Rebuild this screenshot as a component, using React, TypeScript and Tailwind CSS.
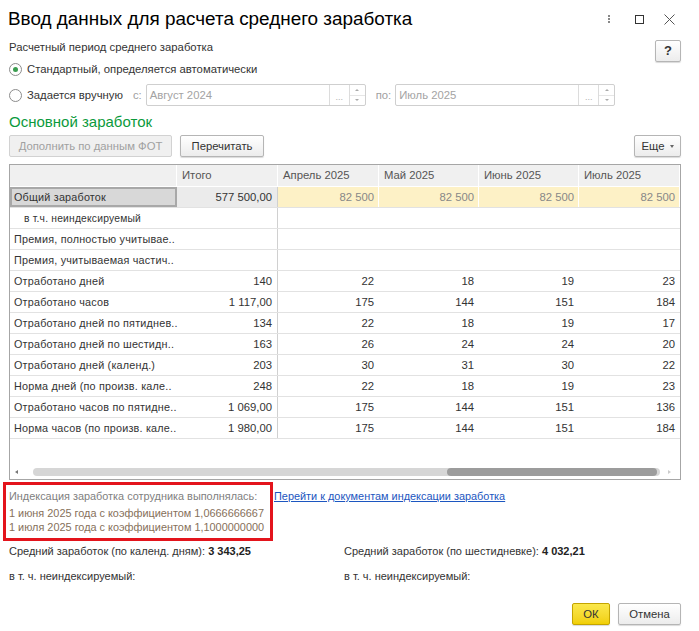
import React from "react";

const months = ["Апрель 2025", "Май 2025", "Июнь 2025", "Июль 2025"];

const rows: { label: string; indent?: boolean; total?: string; vals?: string[] }[] = [
    { label: "в т.ч. неиндексируемый", indent: true },
    { label: "Премия, полностью учитывае.." },
    { label: "Премия, учитываемая частич.." },
    { label: "Отработано дней", total: "140", vals: ["22", "18", "19", "23"] },
    { label: "Отработано часов", total: "1 117,00", vals: ["175", "144", "151", "184"] },
    { label: "Отработано дней по пятиднев..", total: "134", vals: ["22", "18", "19", "17"] },
    { label: "Отработано дней по шестидн..", total: "163", vals: ["26", "24", "24", "20"] },
    { label: "Отработано дней (календ.)", total: "203", vals: ["30", "31", "30", "22"] },
    { label: "Норма дней (по произв. кале..", total: "248", vals: ["22", "18", "19", "23"] },
    { label: "Отработано часов по пятидне..", total: "1 069,00", vals: ["175", "144", "151", "136"] },
    { label: "Норма часов (по произв. кале..", total: "1 980,00", vals: ["175", "144", "151", "184"] },
];

const cols = "grid grid-cols-[167px_101px_101px_100px_100px_101px]";

function Btn({ children, disabled, className = "" }: { children: React.ReactNode; disabled?: boolean; className?: string }) {
    return (
        <div
            className={`h-[22px] flex items-center justify-center rounded-[2px] border text-[11.3px] whitespace-nowrap ${
                disabled
                    ? "border-[#d2d2d2] bg-[#f0f0f0] text-[#a0a0a0]"
                    : "border-[#b5b5b5] bg-gradient-to-b from-white to-[#ececec] text-[#333] shadow-[0_1px_1px_rgba(0,0,0,0.15)]"
            } ${className}`}
        >
            {children}
        </div>
    );
}

function PeriodInput({ value, className = "" }: { value: string; className?: string }) {
    return (
        <div className={`h-[22px] flex border border-[#cfcfcf] rounded-[2px] bg-white ${className}`}>
            <div className="flex-1 flex items-center pl-[3px] text-[#a3a3a3]">{value}</div>
            <div className="w-[20px] border-l border-[#dcdcdc] flex items-end justify-center pb-[3px] text-[9px] leading-none text-[#b0b0b0]">...</div>
            <div className="w-[16px] border-l border-[#dcdcdc] flex flex-col">
                <div className="flex-1 flex items-center justify-center border-b border-[#e6e6e6]">
                    <span className="block w-0 h-0 border-x-[2px] border-x-transparent border-b-[2px] border-b-[#aaa]" />
                </div>
                <div className="flex-1 flex items-center justify-center">
                    <span className="block w-0 h-0 border-x-[2px] border-x-transparent border-t-[2px] border-t-[#aaa]" />
                </div>
            </div>
        </div>
    );
}

function Radio({ checked }: { checked?: boolean }) {
    return (
        <span className="w-[13px] h-[13px] rounded-full border border-[#8c8c8c] bg-white flex items-center justify-center">
            {checked && <span className="w-[5px] h-[5px] rounded-full bg-[#3a9d4f]" />}
        </span>
    );
}

export default function App() {
    return (
        <div className="w-[699px] h-[631px] bg-white px-[9px] flex flex-col text-[#333] font-['Liberation_Sans',Arial,sans-serif] text-[11.3px] overflow-hidden">
            {/* Title bar */}
            <div className="h-[38px] flex items-center -ml-[1px]">
                <div className="flex-1 text-[18.9px] text-black whitespace-nowrap">Ввод данных для расчета среднего заработка</div>
                <div className="flex items-center mr-[6px]">
                    <div className="w-[30px] flex flex-col items-center gap-[1px]">
                        <span className="w-[2px] h-[2px] bg-[#888]" />
                        <span className="w-[2px] h-[2px] bg-[#888]" />
                        <span className="w-[2px] h-[2px] bg-[#888]" />
                    </div>
                    <div className="w-[30px] flex justify-center">
                        <span className="w-[9px] h-[9px] border border-[#333]" />
                    </div>
                    <div className="w-[30px] flex justify-center">
                        <svg width="11" height="11" viewBox="0 0 11 11">
                            <path d="M0.5 0.5 L10.5 10.5 M10.5 0.5 L0.5 10.5" stroke="#555" strokeWidth="1" />
                        </svg>
                    </div>
                </div>
            </div>

            {/* Period section */}
            <div className="flex">
                <div className="flex-1 flex flex-col">
                    <div className="h-[18px] flex items-center">Расчетный период среднего заработка</div>
                    <div className="h-[20px] mt-[3px] flex items-center gap-[5px]">
                        <Radio checked />
                        <span>Стандартный, определяется автоматически</span>
                    </div>
                    <div className="h-[22px] mt-[5px] flex items-center whitespace-nowrap">
                        <Radio />
                        <span className="ml-[5px]">Задается вручную</span>
                        <span className="ml-[10px] text-[#a0a0a0]">с:</span>
                        <PeriodInput value="Август 2024" className="ml-[4px] w-[220px]" />
                        <span className="ml-[10px] text-[#a0a0a0]">по:</span>
                        <PeriodInput value="Июль 2025" className="ml-[4px] w-[220px]" />
                    </div>
                </div>
                <Btn className="w-[26px] mt-[2px] mr-[9px] font-bold text-[13px]">?</Btn>
            </div>

            {/* Main salary */}
            <div className="h-[20px] mt-[6px] flex items-center text-[15px] text-[#0b9a3c]">Основной заработок</div>
            <div className="mt-[3px] flex items-center">
                <Btn disabled className="w-[163px]">Дополнить по данным ФОТ</Btn>
                <Btn className="w-[84px] ml-[8px]">Перечитать</Btn>
                <div className="flex-1" />
                <Btn className="w-[47px] mr-[9px] gap-[5px]">
                    <span>Еще</span>
                    <span className="block w-0 h-0 border-x-[2.5px] border-x-transparent border-t-[3px] border-t-[#666]" />
                </Btn>
            </div>

            {/* Table */}
            <div className="mt-[7px] w-[672px] h-[316px] border border-[#a6a6a6] flex flex-col overflow-hidden">
                <div className={`${cols} h-[22px] bg-[#f0f0f0] text-[#555]`}>
                    <div className="border-r border-white border-b" />
                    <div className="border-r border-white border-b flex items-center pl-[5px]">Итого</div>
                    {months.map((m) => (
                        <div key={m} className="border-r border-white border-b flex items-center pl-[5px]">
                            {m}
                        </div>
                    ))}
                </div>
                <div className={`${cols} h-[21px] border-b border-[#e2e2e2]`}>
                    <div className="bg-[#d8d8d8] border-2 border-[#a8a8a8] flex items-center pl-[2px] text-[10.8px] tracking-[0.2px] text-[#333]">
                        Общий заработок
                    </div>
                    <div className="bg-[#ebebeb] border-r border-[#d0d0d0] flex items-center justify-end pr-[5px]">577 500,00</div>
                    {months.map((m) => (
                        <div key={m} className="bg-[#fdf1c6] border-r border-white flex items-center justify-end pr-[4px] text-[#888]">
                            82 500
                        </div>
                    ))}
                </div>
                {rows.map((r) => (
                    <div key={r.label} className={`${cols} h-[21px] border-b border-[#e2e2e2]`}>
                        <div
                            className={`flex items-center whitespace-nowrap tracking-[0.2px] ${
                                r.indent ? "pl-[14px] pt-[2px] text-[10.3px]" : "pl-[4px] text-[10.8px]"
                            }`}
                        >
                            {r.label}
                        </div>
                        <div className="border-r border-[#d0d0d0] flex items-center justify-end pr-[5px]">{r.total}</div>
                        {months.map((m, i) => (
                            <div key={m} className="flex items-center justify-end pr-[5px]">
                                {r.vals?.[i]}
                            </div>
                        ))}
                    </div>
                ))}
                <div className="flex-1" />
                {/* horizontal scrollbar */}
                <div className="h-[12px] mb-[1px] flex items-center">
                    <span className="ml-[5px] block w-0 h-0 border-y-[2.5px] border-y-transparent border-r-[3px] border-r-[#777]" />
                    <div className="ml-[15px] w-[627px] h-[8px] rounded-full bg-[#d6d6d6] flex">
                        <div className="ml-[414px] w-[210px] h-[8px] rounded-full bg-[#9c9c9c]" />
                    </div>
                    <span className="ml-[8px] block w-0 h-0 border-y-[2.5px] border-y-transparent border-l-[3px] border-l-[#ccc]" />
                </div>
            </div>

            {/* Indexation */}
            <div className="mt-[2px] flex items-start whitespace-nowrap text-[10.9px]">
                <div className="-ml-[6px] w-[270px] h-[59px] border-[3px] border-[#e3141c] pl-[3px] pt-[3px] flex flex-col">
                    <div className="h-[16px] flex items-center text-[#808080]">Индексация заработка сотрудника выполнялась:</div>
                    <div className="mt-[2px] h-[14px] flex items-center text-[#86705a]">1 июня 2025 года с коэффициентом 1,0666666667</div>
                    <div className="h-[14px] flex items-center text-[#86705a]">1 июля 2025 года с коэффициентом 1,1000000000</div>
                </div>
                <div className="ml-[1px] mt-[6px] h-[16px] flex items-center text-[#1c56c0] underline">
                    Перейти к документам индексации заработка
                </div>
            </div>

            {/* Averages */}
            <div className="mt-[1px] h-[18px] flex items-center whitespace-nowrap text-[11px]">
                <div className="w-[335px]">
                    Средний заработок (по календ. дням): <span className="font-bold text-[#222]">3 343,25</span>
                </div>
                <div>
                    Средний заработок (по шестидневке): <span className="font-bold text-[#222]">4 032,21</span>
                </div>
            </div>
            <div className="mt-[7px] h-[18px] flex items-center text-[11px]">
                <div className="w-[335px]">в т. ч. неиндексируемый:</div>
                <div>в т. ч. неиндексируемый:</div>
            </div>

            {/* Footer buttons */}
            <div className="mt-[18px] flex justify-end mr-[9px]">
                <div className="w-[38px] h-[22px] rounded-[2px] border border-[#c4a400] bg-gradient-to-b from-[#fbe84a] to-[#f1cf00] flex items-center justify-center text-[#333] shadow-[0_1px_1px_rgba(0,0,0,0.15)]">
                    ОК
                </div>
                <Btn className="w-[63px] ml-[8px]">Отмена</Btn>
            </div>
        </div>
    );
}
